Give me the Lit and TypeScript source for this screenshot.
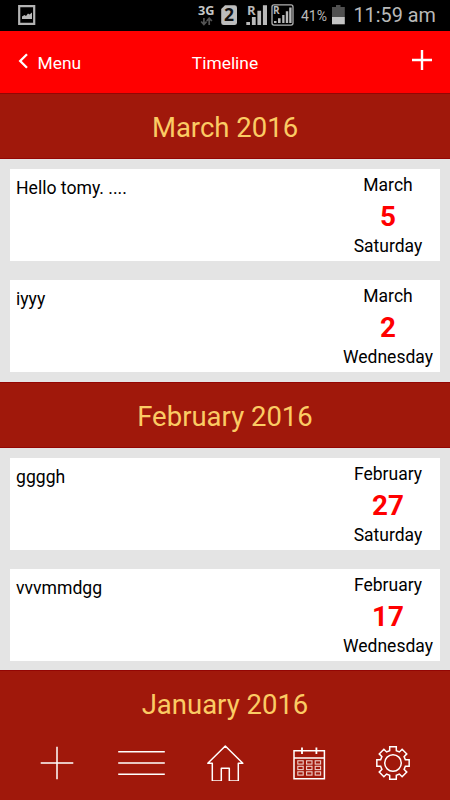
import { LitElement, html, css, svg } from "lit";
import { customElement, property } from "lit/decorators.js";

interface Entry {
  note: string;
  month: string;
  day: number;
  weekday: string;
}

interface Section {
  title: string;
  entries: Entry[];
}

const SECTIONS: Section[] = [
  {
    title: "March 2016",
    entries: [
      { note: "Hello tomy. ....", month: "March", day: 5, weekday: "Saturday" },
      { note: "iyyy", month: "March", day: 2, weekday: "Wednesday" },
    ],
  },
  {
    title: "February 2016",
    entries: [
      { note: "ggggh", month: "February", day: 27, weekday: "Saturday" },
      { note: "vvvmmdgg", month: "February", day: 17, weekday: "Wednesday" },
    ],
  },
  { title: "January 2016", entries: [] },
];

// Outline of an eight-toothed gear centred on (18, 18).
function gearPath(): string {
  const points: string[] = [];
  const add = (r: number, deg: number) => {
    const a = (deg * Math.PI) / 180;
    points.push(`${(18 + r * Math.cos(a)).toFixed(2)} ${(18 + r * Math.sin(a)).toFixed(2)}`);
  };
  for (let k = 0; k < 8; k++) {
    const c = k * 45;
    add(12.8, c - 15);
    add(16.5, c - 11.5);
    add(16.5, c + 11.5);
    add(12.8, c + 15);
  }
  return `M${points.join("L")}Z`;
}

@customElement("status-bar")
export class StatusBar extends LitElement {
  static styles = css`
    :host {
      display: flex;
      height: 31px;
      background: #000;
      color: #b9b9b9;
      font-family: Roboto, sans-serif;
    }
    .picture { width: 18px; height: 31px; margin-left: 18px; }
    .signals { width: 98px; height: 31px; margin-left: 161px; }
    .percent { width: 36px; box-sizing: border-box; padding-left: 6px; font-size: 14px; line-height: 32px; white-space: nowrap; }
    .battery { width: 14px; height: 31px; }
    .clock { margin-left: 8.5px; font-size: 19.8px; line-height: 32px; white-space: nowrap; }
    .bold { font: 700 13px "Open Sans", sans-serif; }
    .sim { font: 700 17.5px "Open Sans", sans-serif; }
    .r { font: 700 13px "Open Sans", sans-serif; }
    .small { font: 700 10px "Open Sans", sans-serif; }
  `;

  render() {
    return html`
      <svg class="picture" viewBox="0 0 18 31">
        <path d="M1.2 6.2H16.2V23.8H1.2Z" fill="none" stroke="#b4b4b4" stroke-width="2.2" />
        <path d="M4 19V16.5L6.5 15L8 16L10 13.5L11.5 14.5L14 12.5V19Z" fill="#b9b9b9" />
      </svg>
      <svg class="signals" viewBox="197 0 98 31">
        <text class="bold" x="197.9" y="15" fill="#c6c6c6" textLength="16.5" lengthAdjust="spacingAndGlyphs">3G</text>
        <g fill="none" stroke="#555" stroke-width="1.7">
          <path d="M203.9 18V24M201.2 21.5L203.9 24.5L206.6 21.5" />
          <path d="M209.2 25V19M206.7 21L209.2 18.3L211.9 21" />
        </g>
        <path d="M225 5.2H234.5Q237 5.2 237 7.5V22.7Q237 25 234.5 25H223.7Q221.2 25 221.2 22.7V9Z" fill="#bdbdbd" />
        <text class="sim" x="224" y="21.4" fill="#111">2</text>
        <g fill="#b9b9b9">
          <path d="M246.3 22H250V25H246.3ZM251.9 17H255.7V25H251.9ZM257.4 10.7H261.1V25H257.4ZM262.9 5.3H267V25H262.9Z" />
          <text class="r" x="246.9" y="15.3" stroke="#000" stroke-width="1.2" paint-order="stroke">R</text>
          <path d="M274 21H276.5V23H274ZM278 18.3H280.6V23H278ZM282.2 15H284.5V23H282.2ZM285.8 11.3H288.2V23H285.8ZM289.2 7.4H291.6V23H289.2Z" />
          <text class="small" x="273.1" y="14.2">R</text>
        </g>
        <rect x="272" y="4.9" width="21" height="20.2" rx="2" fill="none" stroke="#b0b0b0" stroke-width="1.3" />
      </svg>
      <span class="percent">41%</span>
      <svg class="battery" viewBox="331 0 14 31">
        <path d="M336 5H340.5V7H344.8V17H332V7H336Z" fill="#505050" />
        <rect x="332" y="17" width="12.8" height="7.3" fill="#c4c4c4" />
      </svg>
      <span class="clock">11:59 am</span>
    `;
  }
}

@customElement("title-bar")
export class TitleBar extends LitElement {
  static styles = css`
    :host {
      display: grid;
      grid-template-columns: 1fr auto 1fr;
      align-items: center;
      height: 61.7px;
      background: #f00;
      color: #fff;
      font: 17.4px/24px Roboto, sans-serif;
    }
    .back { display: flex; align-items: center; padding-left: 18px; gap: 9.5px; }
    .chevron { width: 10px; height: 16px; margin-top: -2px; }
    .add { justify-self: end; width: 20px; height: 20px; margin: -4px 18.5px 0 0; }
    .label { padding-top: 2px; }
  `;

  render() {
    return html`
      <div class="back">
        <svg class="chevron" viewBox="0 0 10 16">
          <path d="M9 1.2L2.2 8L9 14.8" fill="none" stroke="#fff" stroke-width="2.3" />
        </svg>
        <span class="label">Menu</span>
      </div>
      <span class="label">Timeline</span>
      <svg class="add" viewBox="0 0 20 20">
        <path d="M10 0V20M0 10H20" stroke="#fff" stroke-width="2.4" />
      </svg>
    `;
  }
}

@customElement("timeline-section")
export class TimelineSection extends LitElement {
  @property({ attribute: false }) section!: Section;

  static styles = css`
    :host { display: block; font-family: Roboto, sans-serif; }
    .heading {
      height: 66.6px;
      box-sizing: border-box;
      border: solid #930604;
      border-width: 1px 0;
      background: #a0180b;
      color: #fbcb64;
      font-size: 27.5px;
      line-height: 67.4px;
      text-align: center;
    }
    .entries { display: flex; flex-direction: column; gap: 19.5px; padding: 9.6px 10px; }
    .card {
      display: flex;
      justify-content: space-between;
      height: 91.8px;
      background: #fff;
      color: #000;
      font-size: 17.6px;
    }
    .note { padding: 8.2px 6px; line-height: 22px; }
    .date { display: flex; flex-direction: column; align-items: center; padding: 2px 6.5px 0 0; width: 91px; font-size: 17.5px; line-height: 29.8px; }
    .day { color: #f00; font-size: 27.8px; font-weight: 700; line-height: 31px; }
  `;

  render() {
    const { title, entries } = this.section;
    return html`
      <div class="heading">${title}</div>
      ${entries.length
        ? html`<div class="entries">
            ${entries.map(
              (e) => html`<div class="card">
                <div class="note">${e.note}</div>
                <div class="date">
                  <span>${e.month}</span>
                  <span class="day">${e.day}</span>
                  <span>${e.weekday}</span>
                </div>
              </div>`
            )}
          </div>`
        : null}
    `;
  }
}

@customElement("tab-bar")
export class TabBar extends LitElement {
  static styles = css`
    :host { display: flex; height: 75px; padding: 0 15px; background: #a0180b; }
    .tab { flex: 1; display: flex; justify-content: center; padding-top: 19.5px; }
    .icon { height: 36px; fill: none; stroke: #fff; stroke-width: 1.5; }
  `;

  private icon(width: number, body: unknown) {
    return html`<div class="tab">
      <svg class="icon" width=${width} viewBox="0 0 ${width} 36">${body}</svg>
    </div>`;
  }

  render() {
    return html`
      ${this.icon(36, svg`<path d="M18 1.7V34.3M1.7 18H34.3" />`)}
      ${this.icon(50, svg`<path d="M2.2 6.8H48.8M2.2 18.1H48.8M2.2 29.2H48.8" />`)}
      ${this.icon(
        40,
        svg`<path d="M20.3 1L37.8 18.3H33.3V36H24.3V23.2H16.3V36H7.3V18.3H2.8Z" stroke-linejoin="round" />`
      )}
      ${this.icon(
        36,
        svg`<path d="M3 5.8H33.4V33.8H3ZM3 12.9H33.4" />
          <path d="M11 2.5V9M25.4 2.5V9" stroke-width="1.8" />
          <g stroke-width="1.1" stroke="#f0d0cb">
            ${[15.8, 21.3, 26.8].map((y) =>
              [6.8, 15.6, 24.2].map((x) => svg`<rect x=${x} y=${y} width="5.4" height="3.3" />`)
            )}
          </g>`
      )}
      ${this.icon(36, svg`<path d=${gearPath()} /><circle cx="18" cy="18" r="8.3" />`)}
    `;
  }
}

@customElement("app-root")
export class AppRoot extends LitElement {
  static styles = css`
    :host {
      display: flex;
      flex-direction: column;
      width: 450px;
      height: 800px;
      overflow: hidden;
      background: #e4e4e4;
    }
    status-bar, title-bar, tab-bar { flex: none; }
    .timeline { flex: 1; min-height: 0; overflow: hidden; background: #e4e4e4; }
  `;

  render() {
    return html`
      <status-bar></status-bar>
      <title-bar></title-bar>
      <main class="timeline">
        ${SECTIONS.map((s) => html`<timeline-section .section=${s}></timeline-section>`)}
      </main>
      <tab-bar></tab-bar>
    `;
  }
}
